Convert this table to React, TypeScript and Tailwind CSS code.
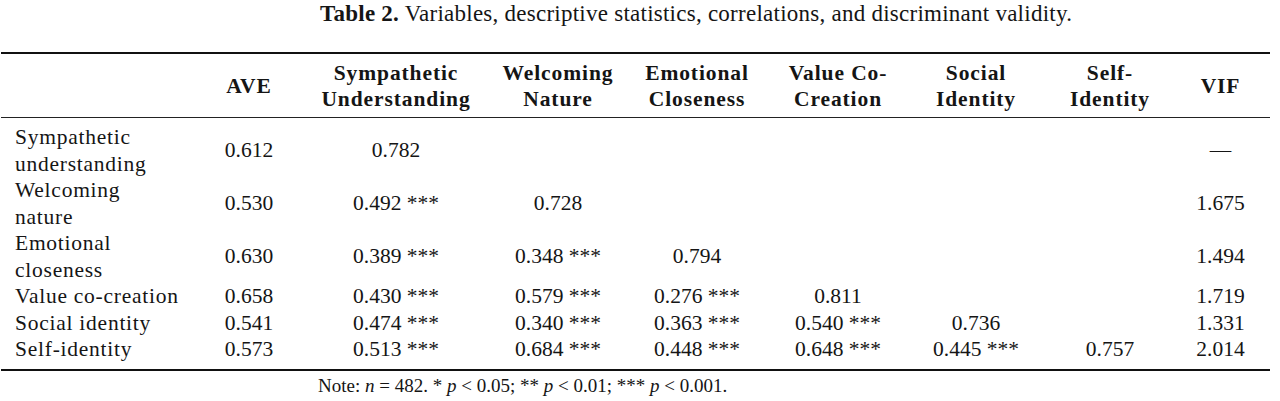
import React from "react";

const serif = { fontFamily: '"Liberation Serif", "Times New Roman", serif' };

type Row = { label: string[]; cells: string[] };

const rows: Row[] = [
  { label: ["Sympathetic", "understanding"], cells: ["0.612", "0.782", "", "", "", "", "", "—"] },
  { label: ["Welcoming", "nature"], cells: ["0.530", "0.492 ***", "0.728", "", "", "", "", "1.675"] },
  { label: ["Emotional", "closeness"], cells: ["0.630", "0.389 ***", "0.348 ***", "0.794", "", "", "", "1.494"] },
  { label: ["Value co-creation"], cells: ["0.658", "0.430 ***", "0.579 ***", "0.276 ***", "0.811", "", "", "1.719"] },
  { label: ["Social identity"], cells: ["0.541", "0.474 ***", "0.340 ***", "0.363 ***", "0.540 ***", "0.736", "", "1.331"] },
  { label: ["Self-identity"], cells: ["0.573", "0.513 ***", "0.684 ***", "0.448 ***", "0.648 ***", "0.445 ***", "0.757", "2.014"] },
];

const headers: string[][] = [
  ["AVE"],
  ["Sympathetic", "Understanding"],
  ["Welcoming", "Nature"],
  ["Emotional", "Closeness"],
  ["Value Co-", "Creation"],
  ["Social", "Identity"],
  ["Self-", "Identity"],
  ["VIF"],
];

const gridCols = "grid grid-cols-[200px_96px_198px_126px_152px_130px_146px_122px_99px]";

export default function App() {
  return (
    <div className="w-[1280px] h-[401px] bg-white text-[#151515] overflow-hidden" style={serif}>
      <div className="pt-[1px] pl-[320px] text-[23px] leading-[26px] tracking-[0.25px] mb-[25px] whitespace-nowrap">
        <span className="font-bold">Table 2.</span> Variables, descriptive statistics, correlations, and discriminant validity.
      </div>
      <div className="w-[1269px] ml-[1px] border-t-2 border-b-2 border-[#111]">
        <div className={`${gridCols} pt-[6px] pb-[5px] border-b border-[#222] text-[21.5px] leading-[26px] font-bold`}>
          <div />
          {headers.map((h, i) => (
            <div key={i} className="flex flex-col items-center justify-center text-center whitespace-nowrap tracking-[0.9px]">
              {h.map((l, j) => (
                <span key={j}>{l}</span>
              ))}
            </div>
          ))}
        </div>
        <div className="pt-[6px] pb-[6px] text-[21.5px] leading-[26.5px]">
          {rows.map((r, i) => (
            <div key={i} className={gridCols}>
              <div className="pl-[14px] flex flex-col whitespace-nowrap tracking-[0.75px]">
                {r.label.map((l, j) => (
                  <span key={j}>{l}</span>
                ))}
              </div>
              {r.cells.map((c, j) => (
                <div key={j} className="flex items-center justify-center whitespace-nowrap">
                  {c}
                </div>
              ))}
            </div>
          ))}
        </div>
      </div>
      <div className="pt-[3px] pl-[318px] text-[19px] leading-[24px] whitespace-nowrap">
        Note: <i>n</i> = 482. * <i>p</i> &lt; 0.05; ** <i>p</i> &lt; 0.01; *** <i>p</i> &lt; 0.001.
      </div>
    </div>
  );
}
